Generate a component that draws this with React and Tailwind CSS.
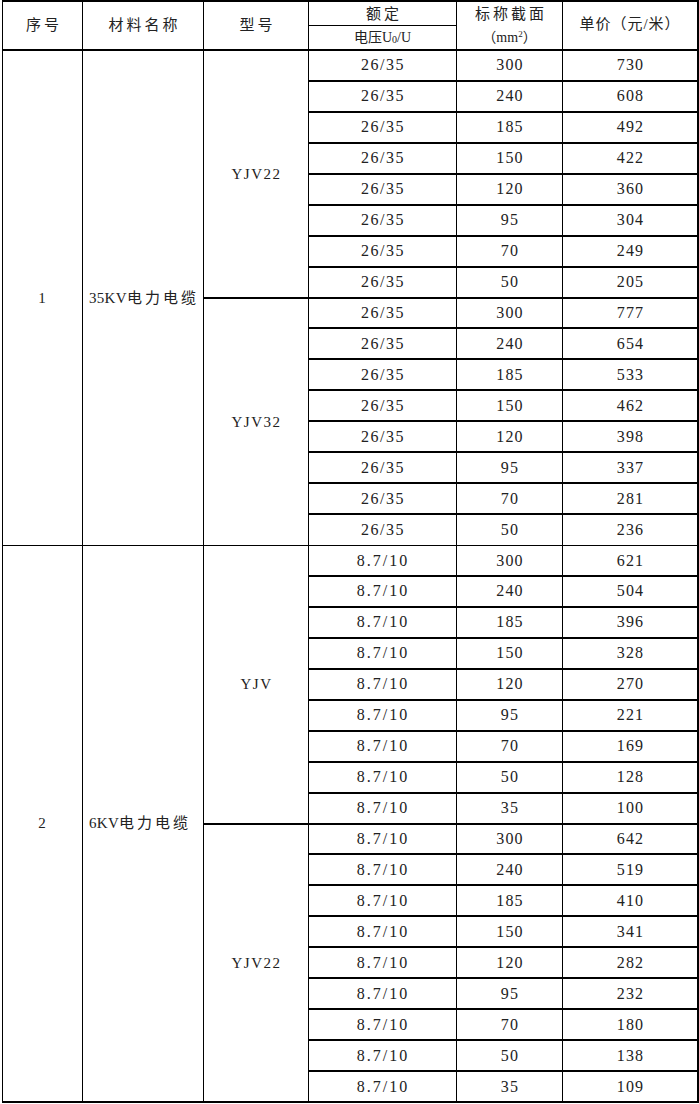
import React from "react";

const FONT = { fontFamily: '"Liberation Serif", "Noto Sans CJK SC", serif' };

const groups = [
  {
    no: "1",
    latin: "35KV",
    span: "row-span-16",
    rows: [
      {
        model: "YJV22",
        span: "row-span-8",
        v: "26/35",
        vt: "tracking-[1.5px]",
        items: [
          ["300", "730"], ["240", "608"], ["185", "492"], ["150", "422"],
          ["120", "360"], ["95", "304"], ["70", "249"], ["50", "205"],
        ],
      },
      {
        model: "YJV32",
        span: "row-span-8",
        v: "26/35",
        vt: "tracking-[1.5px]",
        items: [
          ["300", "777"], ["240", "654"], ["185", "533"], ["150", "462"],
          ["120", "398"], ["95", "337"], ["70", "281"], ["50", "236"],
        ],
      },
    ],
  },
  {
    no: "2",
    latin: "6KV",
    span: "row-span-18",
    rows: [
      {
        model: "YJV",
        span: "row-span-9",
        v: "8.7/10",
        vt: "tracking-[2px]",
        items: [
          ["300", "621"], ["240", "504"], ["185", "396"], ["150", "328"],
          ["120", "270"], ["95", "221"], ["70", "169"], ["50", "128"], ["35", "100"],
        ],
      },
      {
        model: "YJV22",
        span: "row-span-9",
        v: "8.7/10",
        vt: "tracking-[2px]",
        items: [
          ["300", "642"], ["240", "519"], ["185", "410"], ["150", "341"],
          ["120", "282"], ["95", "232"], ["70", "180"], ["50", "138"], ["35", "109"],
        ],
      },
    ],
  },
];

const cell = "flex items-center justify-center whitespace-nowrap border-black text-[#222222]";

export default function App() {
  const children = [];
  children.push(
    <div key="h1" className={`${cell} row-span-2 border-r border-b-2 text-[15px] tracking-[3px] pl-[3px]`}>序号</div>,
    <div key="h2" className={`${cell} row-span-2 border-r border-b-2 text-[15px] tracking-[3px] pl-[3px]`}>材料名称</div>,
    <div key="h3" className={`${cell} row-span-2 border-r border-b-2 text-[15px] tracking-[3px] pl-[3px]`}>型号</div>,
    <div key="h4" className={`${cell} border-r border-b text-[15px] tracking-[3px] pl-[3px] pt-[1px]`}>额定</div>,
    <div key="h5" className={`${cell} row-span-2 flex-col border-r border-b-2 text-[15px] leading-[24px]`}>
      <span className="tracking-[3px] pl-[3px]">标称截面</span>
      <span className="text-[14px]">（mm<sup className="text-[9px]">2</sup>）</span>
    </div>,
    <div key="h6" className={`${cell} row-span-2 border-r-2 border-b-2 text-[15px] tracking-[1px] pb-[2px]`}>单价（元/米）</div>,
    <div key="h7" className={`${cell} border-r border-b-2 text-[14px] pb-[1px]`}>
      电压U<sub className="text-[10px]">0</sub>/U
    </div>
  );

  groups.forEach((g, gi) => {
    const lastGroup = gi === groups.length - 1;
    children.push(
      <div key={`no${gi}`} className={`${cell} ${g.span} border-r ${lastGroup ? "border-b-2" : "border-b"} text-[15px] pr-[1px]`}>{g.no}</div>,
      <div key={`nm${gi}`} className={`${cell} ${g.span} justify-start pl-[6px] border-r ${lastGroup ? "border-b-2" : "border-b"} text-[15px]`}>
        <span className="tracking-[0.3px]">{g.latin}</span>
        <span className="tracking-[3px]">电力电缆</span>
      </div>
    );
    g.rows.forEach((r, ri) => {
      const lastSub = ri === g.rows.length - 1;
      children.push(
        <div key={`m${gi}${ri}`} className={`${cell} ${r.span} border-r ${lastSub && lastGroup ? "border-b-2" : lastSub ? "border-b" : "border-b-2"} text-[15px] tracking-[1.5px] pl-[1px]`}>{r.model}</div>
      );
      r.items.forEach((it, ii) => {
        const last = ii === r.items.length - 1;
        const bb = last && lastSub && !lastGroup ? "border-b" : "border-b-2";
        children.push(
          <div key={`v${gi}${ri}${ii}`} className={`${cell} border-r ${bb} text-[16px] ${r.vt} pl-[1px]`}>{r.v}</div>,
          <div key={`s${gi}${ri}${ii}`} className={`${cell} border-r ${bb} text-[16px] tracking-[1.2px] pl-[1px]`}>{it[0]}</div>,
          <div key={`p${gi}${ri}${ii}`} className={`${cell} border-r-2 ${bb} text-[16px] tracking-[1.2px] pl-[1px]`}>{it[1]}</div>
        );
      });
    });
  });

  return (
    <div className="w-[699px] h-[1104px] bg-white" style={FONT}>
      <div className="grid ml-[2px] w-[697px] h-[1103px] border-t-2 border-l border-black grid-cols-[80px_121px_105px_148px_106px_136px] grid-rows-[24px_25px_repeat(34,minmax(0,1fr))]">
        {children}
      </div>
    </div>
  );
}
